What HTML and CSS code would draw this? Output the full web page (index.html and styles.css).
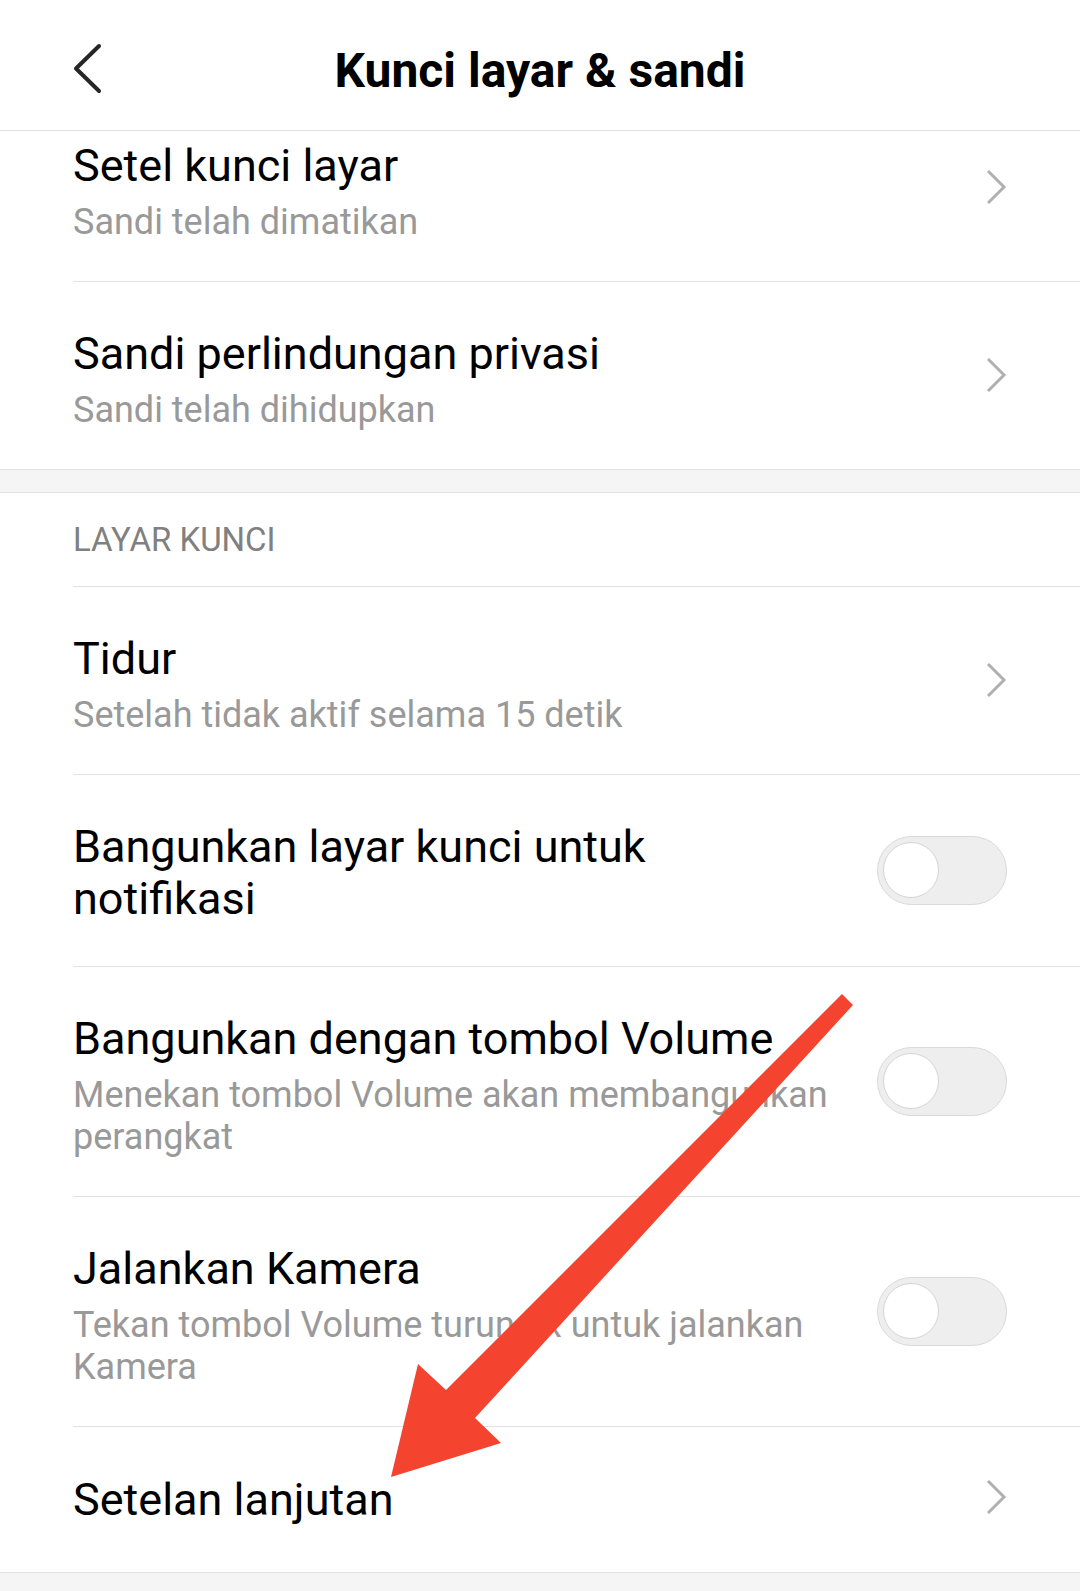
FILE: index.html
```html
<!DOCTYPE html>
<html lang="id">
<head>
    <meta charset="UTF-8">
    <title>Kunci layar &amp; sandi</title>
    <link rel="stylesheet" href="styles.css">
</head>
<body>

<div class="page">
    <!-- 顶部标题栏 -->
    <div class="topbar">
        <a class="back" href="#">
            <svg width="30" height="52" viewBox="0 0 30 52">
                <polyline points="26,3 3,25.5 26,48"></polyline>
            </svg>
        </a>
        <h1 class="topbar-title">Kunci layar &amp; sandi</h1>
        <span></span>
    </div>

    <ul class="list list-first">
        <li class="item">
            <div class="item-text">
                <div class="item-title">Setel kunci layar</div>
                <div class="item-sub">Sandi telah dimatikan</div>
            </div>
            <svg class="more" width="22" height="36" viewBox="0 0 22 36">
                <polyline points="3,2 19,18 3,34"></polyline>
            </svg>
        </li>
        <li class="item">
            <div class="item-text">
                <div class="item-title">Sandi perlindungan privasi</div>
                <div class="item-sub">Sandi telah dihidupkan</div>
            </div>
            <svg class="more" width="22" height="36" viewBox="0 0 22 36">
                <polyline points="3,2 19,18 3,34"></polyline>
            </svg>
        </li>
    </ul>

    <div class="gap"></div>

    <ul class="list">
        <li class="list-header">LAYAR KUNCI</li>
        <li class="item">
            <div class="item-text">
                <div class="item-title">Tidur</div>
                <div class="item-sub">Setelah tidak aktif selama 15 detik</div>
            </div>
            <svg class="more" width="22" height="36" viewBox="0 0 22 36">
                <polyline points="3,2 19,18 3,34"></polyline>
            </svg>
        </li>
        <li class="item">
            <div class="item-text">
                <div class="item-title">Bangunkan layar kunci untuk notifikasi</div>
            </div>
            <span class="switch"></span>
        </li>
        <li class="item">
            <div class="item-text">
                <div class="item-title">Bangunkan dengan tombol Volume</div>
                <div class="item-sub">Menekan tombol Volume akan membangunkan perangkat</div>
            </div>
            <span class="switch"></span>
        </li>
        <li class="item">
            <div class="item-text">
                <div class="item-title">Jalankan Kamera</div>
                <div class="item-sub">Tekan tombol Volume turun 2x untuk jalankan Kamera</div>
            </div>
            <span class="switch"></span>
        </li>
        <li class="item item-single">
            <div class="item-text">
                <div class="item-title">Setelan lanjutan</div>
            </div>
            <svg class="more" width="22" height="36" viewBox="0 0 22 36">
                <polyline points="3,2 19,18 3,34"></polyline>
            </svg>
        </li>
    </ul>

    <div class="gap gap-end"></div>

    <!-- 红色指示箭头 -->
    <svg class="pointer" width="1080" height="1591" viewBox="0 0 1080 1591">
        <polygon points="842,994 853,1005 475,1418 501,1443 391,1477 418,1364 446,1390"></polygon>
    </svg>
</div>

</body>
</html>
```

FILE: styles.css
```css
/* 页面基础 */
body {
    margin: 0;
    background: #fff;
    font-family: Roboto, "Noto Sans", "Liberation Sans", sans-serif;
    color: #000;
}
.page {
    position: relative;
    width: 1080px;
    height: 1591px;
    overflow: hidden;
}

/* 顶部标题栏 */
.topbar {
    position: relative;
    z-index: 1;
    display: grid;
    grid-template-columns: 1fr auto 1fr;
    align-items: center;
    height: 130px;
    padding: 0 73px;
    background: #fff;
    border-bottom: 1px solid #e2e2e2;
}
.topbar .back {
    display: flex;
    align-items: center;
    padding-top: 8px;
}
.topbar .back polyline {
    fill: none;
    stroke: #262626;
    stroke-width: 4;
    stroke-linecap: round;
    stroke-linejoin: round;
}
.topbar-title {
    margin: 0;
    padding-top: 11px;
    font-size: 48px;
    font-weight: bold;
    line-height: 56px;
}

/* 列表 */
.list {
    margin: 0;
    padding: 0;
    list-style: none;
}
.list-first {
    margin-top: -37px;
}
.list-header {
    display: flex;
    align-items: center;
    height: 93px;
    margin-left: 73px;
    border-bottom: 1px solid #e2e2e2;
    color: #808080;
    font-size: 33px;
}
.item {
    display: flex;
    align-items: center;
    margin-left: 73px;
    padding: 40px 73px 41px 0;
    border-bottom: 1px solid #e2e2e2;
}
.item:last-child {
    border-bottom: none;
}
.item-single {
    padding-top: 41px;
    padding-bottom: 46px;
}
.item-text {
    flex: 1;
    margin-right: 42px;
    padding-top: 6px;
}
.item-title {
    font-size: 45px;
    line-height: 52px;
}
.item-sub {
    margin-top: 9px;
    margin-bottom: -3px;
    color: #999;
    font-size: 36px;
    line-height: 42px;
}
.more {
    flex: none;
}
.more polyline {
    fill: none;
    stroke: #b0b0b0;
    stroke-width: 3;
}

/* 开关 */
.switch {
    position: relative;
    flex: none;
    width: 128px;
    height: 67px;
    border: 1px solid #d9d9d9;
    border-radius: 35px;
    background: #eee;
}
.switch::after {
    content: "";
    position: absolute;
    top: 5px;
    left: 5px;
    width: 54px;
    height: 54px;
    border: 1.5px solid #d4d4d4;
    border-radius: 50%;
    background: #fff;
}

/* 分组间隔 */
.gap {
    height: 22px;
    border-top: 1px solid #e2e2e2;
    border-bottom: 1px solid #e2e2e2;
    background: #f5f5f5;
}
.gap-end {
    height: 40px;
    border-bottom: none;
}

/* 红色指示箭头 */
.pointer {
    position: absolute;
    top: 0;
    left: 0;
    z-index: 2;
}
.pointer polygon {
    fill: #f4432e;
}
```
